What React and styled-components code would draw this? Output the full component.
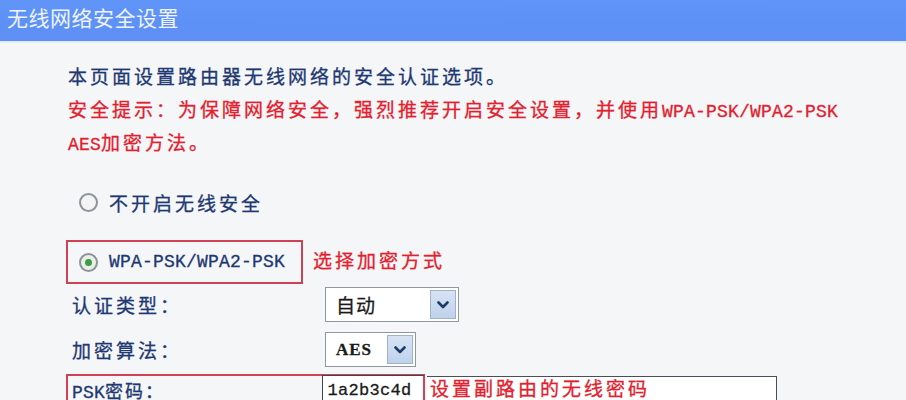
import React from 'react';
import styled, { createGlobalStyle } from 'styled-components';

const GlobalStyle = createGlobalStyle`
    html, body {
        margin: 0;
        padding: 0;
        background: #f5f6f8;
    }
    body {
        font-family: "Noto Sans CJK SC", "Liberation Sans", sans-serif;
    }
`;

const Page = styled.div`
    width: 906px;
    height: 400px;
    overflow: hidden;
    background: #f5f6f8;
`;

const Header = styled.div`
    height: 43px;
    display: flex;
    align-items: center;
    padding: 0 0 8px 7px;
    box-sizing: border-box;
    background: linear-gradient(#6094f7, #5d8ff4);
    border-bottom: 2px solid #e3edf8;
    color: #eef3fe;
    font-size: 21px;
    letter-spacing: 0.5px;
`;

const Content = styled.div`
    padding: 16px 0 0 68px;
    color: #1d3872;
    font-size: 19px;
    letter-spacing: 3px;
    -webkit-text-stroke: 0.3px currentColor;
`;

const Line = styled.div`
    height: 33px;
    line-height: 33px;
    white-space: nowrap;
    color: ${p => (p.warn ? '#e2202e' : '#1d3872')};
`;

const Mono = styled.span`
    font-family: "Liberation Mono", monospace;
    font-size: 18px;
    letter-spacing: 0.2px;
`;

const RadioRow = styled.div`
    display: flex;
    align-items: center;
    gap: 11px;
    height: 30px;
    margin-top: ${p => p.top || 0}px;
`;

const Radio = styled.span`
    width: 15px;
    height: 15px;
    border: 2px solid #8d9399;
    border-radius: 50%;
    background: ${p => (p.checked ? '#e8f0e8' : '#f4f4f4')};
    display: flex;
    align-items: center;
    justify-content: center;
    margin-left: 11px;
    -webkit-text-stroke: 0;
    &::after {
        content: '';
        display: ${p => (p.checked ? 'block' : 'none')};
        width: 7px;
        height: 7px;
        border-radius: 50%;
        background: #3f9b45;
    }
`;

const Choice = styled.div`
    display: flex;
    align-items: center;
    margin-top: 23px;
    margin-left: -2px;
    gap: 10px;
`;

const Highlight = styled.div`
    display: flex;
    align-items: center;
    border: 2px solid #cd4355;
    height: 40px;
    width: 233px;
    gap: 11px;
    box-sizing: content-box;
`;

const Note = styled.span`
    color: #e2202e;
    margin-top: -6px;
`;

const FormRow = styled.div`
    display: flex;
    align-items: center;
    height: 35px;
    margin-top: ${p => p.top || 0}px;
`;

const Label = styled.div`
    width: 253px;
    padding-left: 4px;
    white-space: nowrap;
`;

const Select = styled.div`
    display: flex;
    align-items: center;
    justify-content: space-between;
    width: ${p => p.w}px;
    height: 35px;
    box-sizing: border-box;
    background: #fff;
    border: 1px solid #8f979f;
    padding: 0 2px 0 10px;
    letter-spacing: 1px;
    color: #1a1a1a;
`;

const SelValue = styled.span`
    font-family: ${p => (p.latin ? '"Liberation Serif", serif' : 'inherit')};
    font-weight: ${p => (p.latin ? 700 : 400)};
    font-size: ${p => (p.latin ? '17px' : '19px')};
`;

const DropButton = styled.span`
    width: 26px;
    height: 29px;
    box-sizing: border-box;
    border: 1px solid #9fb2c8;
    background: linear-gradient(#d6e3f4, #bfd2ec);
    display: flex;
    align-items: center;
    justify-content: center;
`;

const PskRow = styled.div`
    display: flex;
    align-items: flex-start;
    margin-top: 7px;
    margin-left: -2px;
`;

const PskBox = styled.div`
    display: flex;
    align-items: flex-start;
    width: 359px;
    height: 40px;
    border: 2px solid #cd4355;
    border-right: none;
    box-sizing: border-box;
`;

const PskLabel = styled(Label)`
    width: 251px;
    padding-left: 4px;
    font-size: 18px;
    letter-spacing: 2px;
    line-height: 28px;
`;

const Input = styled.div`
    width: 104px;
    height: 34px;
    box-sizing: border-box;
    border: 1px solid #3c4550;
    border-right: 2px solid #cd4355;
    background: #fff;
    color: #1a1a1a;
    padding-left: 5px;
    line-height: 30px;
    margin-top: -1px;
    font-family: "Liberation Mono", monospace;
    font-size: 17px;
    letter-spacing: 0.3px;
`;

const Hint = styled.div`
    width: 350px;
    height: 34px;
    margin-top: 2px;
    margin-left: 2px;
    box-sizing: border-box;
    border: 1px solid #47505a;
    border-left: none;
    background: #fff;
    color: #e2202e;
    padding-left: 3px;
    line-height: 22px;
`;

const Chevron = () => (
    <svg width="12" height="8" viewBox="0 0 12 8">
        <path d="M1.5 1.5 L6 6 L10.5 1.5" fill="none" stroke="#1f3a66" strokeWidth="2.6" strokeLinecap="round" strokeLinejoin="round" />
    </svg>
);

export default function App() {
    return (
        <Page>
            <GlobalStyle />
            <Header>无线网络安全设置</Header>
            <Content>
                <Line>本页面设置路由器无线网络的安全认证选项。</Line>
                <Line warn>安全提示：为保障网络安全，强烈推荐开启安全设置，并使用<Mono>WPA-PSK/WPA2-PSK</Mono></Line>
                <Line warn><Mono>AES</Mono>加密方法。</Line>

                <RadioRow top={29}>
                    <Radio />
                    <span>不开启无线安全</span>
                </RadioRow>

                <Choice>
                    <Highlight>
                        <Radio checked />
                        <Mono>WPA-PSK/WPA2-PSK</Mono>
                    </Highlight>
                    <Note>选择加密方式</Note>
                </Choice>

                <FormRow top={3}>
                    <Label>认证类型：</Label>
                    <Select w={134}>
                        <SelValue>自动</SelValue>
                        <DropButton><Chevron /></DropButton>
                    </Select>
                </FormRow>

                <FormRow top={10}>
                    <Label>加密算法：</Label>
                    <Select w={91}>
                        <SelValue latin>AES</SelValue>
                        <DropButton><Chevron /></DropButton>
                    </Select>
                </FormRow>

                <PskRow>
                    <PskBox>
                        <PskLabel><Mono>PSK</Mono>密码：</PskLabel>
                        <Input>1a2b3c4d</Input>
                    </PskBox>
                    <Hint>设置副路由的无线密码</Hint>
                </PskRow>
            </Content>
        </Page>
    );
}
